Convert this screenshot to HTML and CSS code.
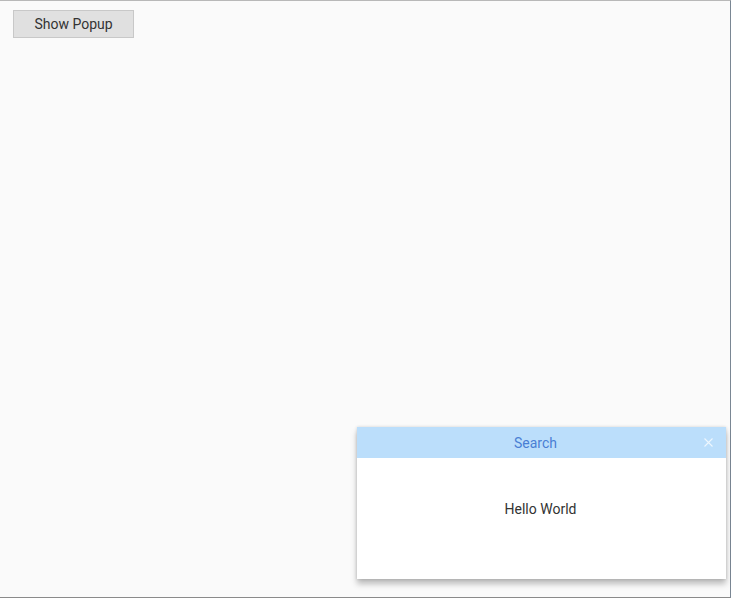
FILE: index.html
```html
<!DOCTYPE html>
<html>
<head>
<meta charset="utf-8">
<link rel="stylesheet" href="styles.css">
</head>
<body>
<div class="frame">
  <button class="btn">Show Popup</button>
  <div class="popup">
    <div class="popup-header">
      <span class="popup-title">Search</span>
      <svg class="popup-close" width="9" height="9" viewBox="0 0 9 9"><path d="M0.5 0.5 L8.5 8.5 M8.5 0.5 L0.5 8.5" stroke="#ffffff" stroke-opacity="0.75" stroke-width="1.1" fill="none"/></svg>
    </div>
    <div class="popup-body">Hello World</div>
  </div>
</div>
</body>
</html>
```
FILE: styles.css
```css
html, body {
  margin: 0;
  padding: 0;
  background: #fafafa;
}
.frame {
  position: relative;
  box-sizing: border-box;
  width: 731px;
  height: 598px;
  border-top: 1px solid #b8b8b8;
  border-right: 1px solid #7a8794;
  border-bottom: 1px solid #8a8a8a;
  padding: 9px 0 0 13px;
  background: #fafafa;
  font-family: Roboto, "Liberation Sans", sans-serif;
}
.btn {
  box-sizing: border-box;
  width: 121px;
  height: 28px;
  background: #e0e0e0;
  border: 1px solid #c8c8c8;
  border-radius: 0;
  font-family: Roboto, "Liberation Sans", sans-serif;
  font-size: 14px;
  color: #333;
  padding: 0;
  margin: 0;
}
.popup {
  position: absolute;
  left: 357px;
  top: 426px;
  width: 369px;
  height: 152px;
  background: #fff;
  box-shadow: 0 5px 6px rgba(0,0,0,0.25), 0 0 3px rgba(0,0,0,0.15);
  display: flex;
  flex-direction: column;
}
.popup-header {
  position: relative;
  height: 31px;
  background: #bbdefb;
  display: flex;
  align-items: center;
  justify-content: center;
  padding-right: 12px;
}
.popup-title {
  font-size: 14px;
  color: #4a7fd4;
}
.popup-close {
  position: absolute;
  right: 13px;
  top: 11px;
}
.popup-body {
  flex: 1;
  padding-top: 43px;
  padding-right: 2px;
  text-align: center;
  line-height: 16px;
  font-size: 14px;
  color: #333;
}
```
